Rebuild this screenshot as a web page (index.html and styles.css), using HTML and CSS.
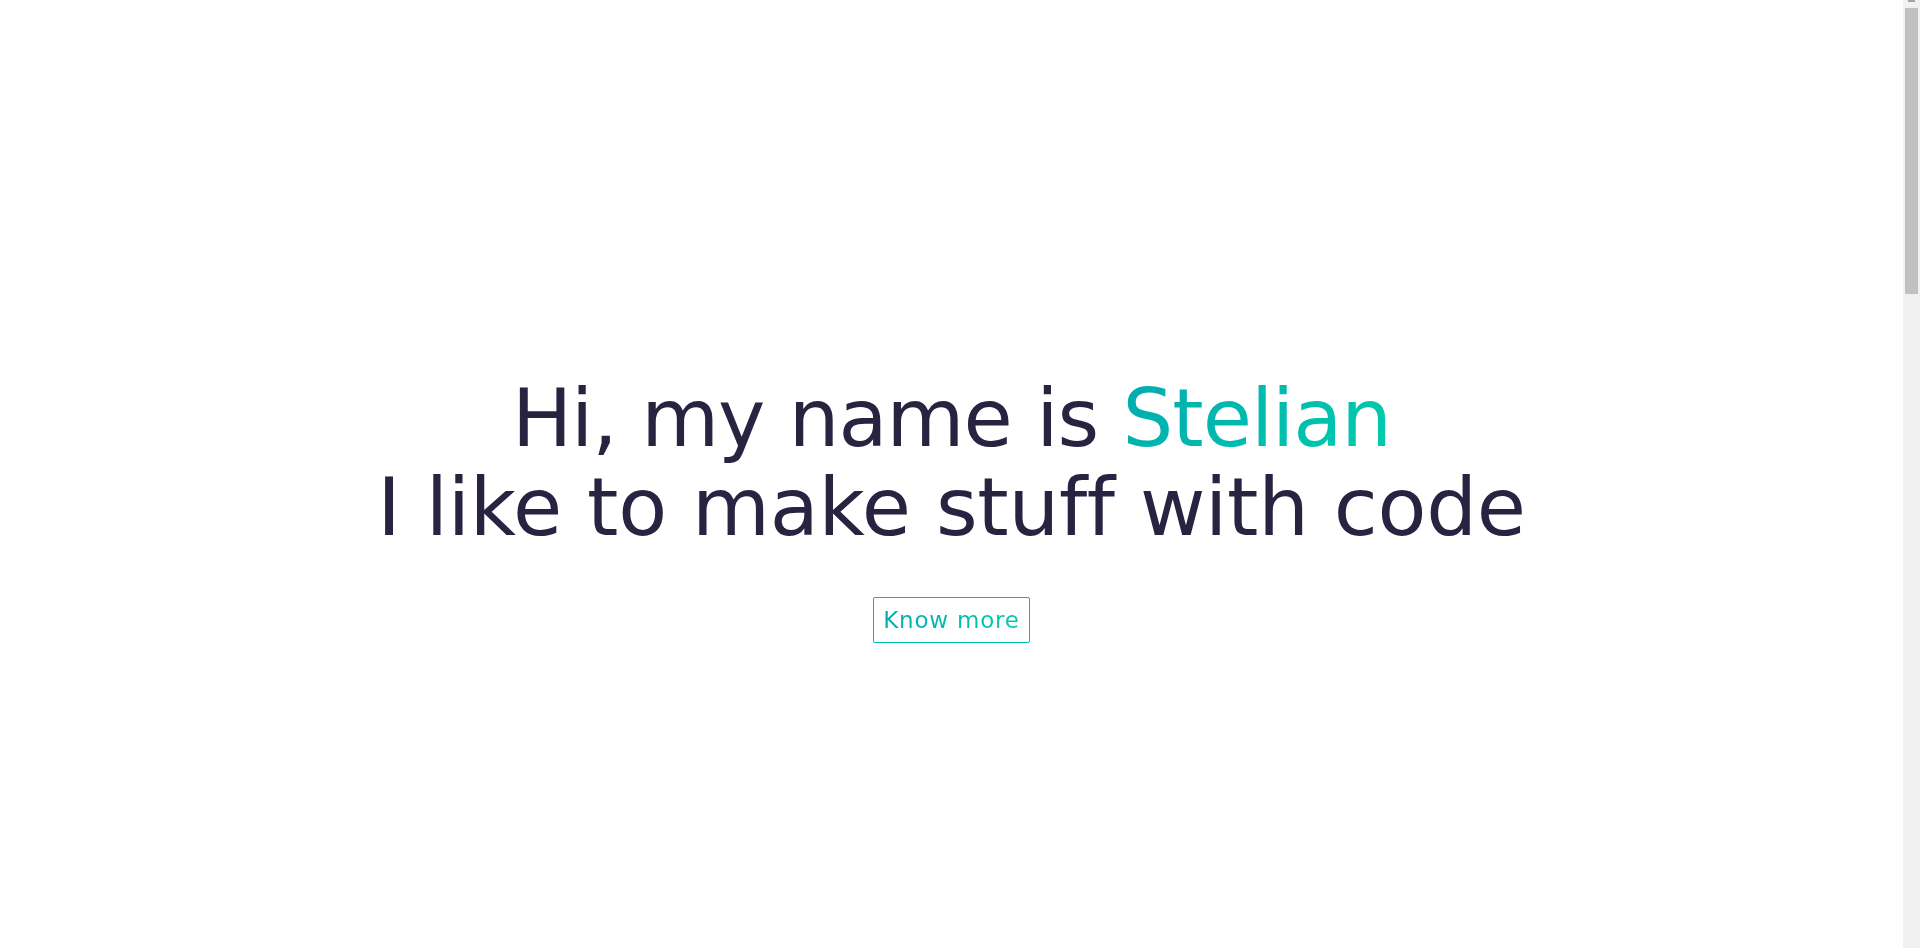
FILE: index.html
```html
<!DOCTYPE html>
<html lang="en">
<head>
<meta charset="utf-8">
<title>Stelian</title>
<link rel="stylesheet" href="styles.css">
</head>
<body>
<div class="page">
  <main class="content">
    <section class="hero">
      <h1 class="hero-title">
        <span class="line line-1">Hi, my name is <span class="accent">Stelian</span></span>
        <span class="line line-2">I like to make stuff with code</span>
      </h1>
      <a class="cta-btn" href="#about"><span class="cta-text">Know more</span></a>
    </section>
  </main>
  <div class="scrollbar" aria-hidden="true">
    <div class="scroll-arrow"></div>
    <div class="scroll-thumb"></div>
  </div>
</div>
</body>
</html>
```

FILE: styles.css
```css
html, body {
  margin: 0;
  padding: 0;
  background: #ffffff;
  overflow: hidden;
}

body {
  font-family: "DejaVu Sans", "Open Sans", sans-serif;
  color: #272341;
}

.page {
  display: flex;
  height: 100vh;
}

.content {
  flex: 1;
  min-width: 0;
}

.hero {
  height: 100vh;
  box-sizing: border-box;
  padding-top: 68px;
  display: flex;
  flex-direction: column;
  align-items: center;
  justify-content: center;
}

.hero-title {
  margin: 0;
  font-size: 80px;
  font-weight: 400;
  line-height: 89px;
  text-align: center;
  display: flex;
  flex-direction: column;
  align-items: center;
}

.line-1 {
  letter-spacing: -1px;
}

.line-2 {
  letter-spacing: -0.25px;
}

.accent {
  background-image: linear-gradient(135deg, #02aab0 0%, #00cdac 100%);
  -webkit-background-clip: text;
  background-clip: text;
  -webkit-text-fill-color: transparent;
  color: #02aab0;
}

.cta-btn {
  margin-top: 45px;
  display: inline-block;
  padding: 10px 9px;
  font-size: 23px;
  line-height: 24px;
  letter-spacing: 0.8px;
  text-decoration: none;
  border: 1px solid #01bdae;
  border-radius: 2px;
}

.cta-text {
  background-image: linear-gradient(135deg, #02aab0 0%, #00cdac 100%);
  -webkit-background-clip: text;
  background-clip: text;
  -webkit-text-fill-color: transparent;
  color: #01bdae;
}

.scrollbar {
  width: 17px;
  flex: 0 0 17px;
  height: 100vh;
  box-sizing: border-box;
  background: #f1f1f1;
  display: flex;
  flex-direction: column;
  align-items: center;
}

.scroll-arrow {
  width: 7px;
  height: 2px;
  background: #a3a3a3;
}

.scroll-thumb {
  margin-top: 6px;
  width: 13px;
  height: 286px;
  background: #c1c1c1;
}
```
